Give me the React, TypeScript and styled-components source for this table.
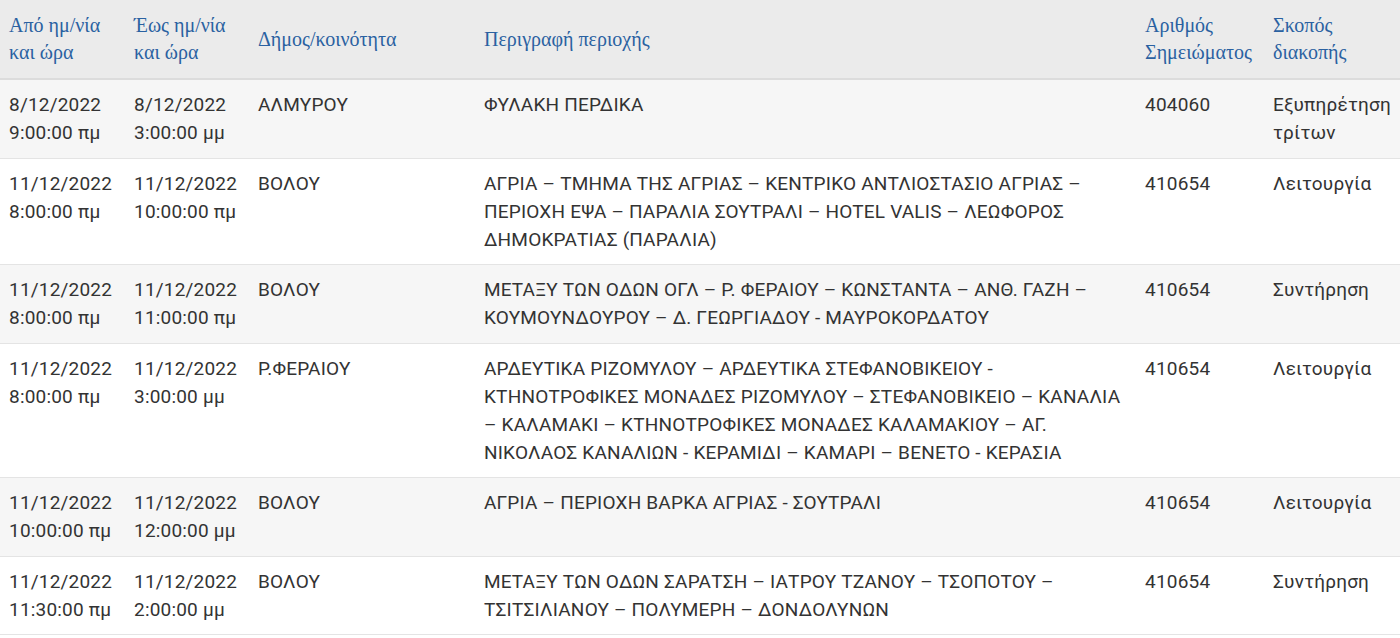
import React from "react";
import styled, { createGlobalStyle } from "styled-components";

const Global = createGlobalStyle`
  html, body { margin: 0; padding: 0; background: #ffffff; }
  body { font-family: Roboto, "Noto Sans", sans-serif; }
`;

const Table = styled.table`
  width: 1400px;
  border-collapse: collapse;
  table-layout: fixed;
`;

const HeadRow = styled.tr`
  background: #ebebeb;
  border-bottom: 2px solid #dcdcdc;
`;

const Th = styled.th`
  font-family: "Liberation Serif", "DejaVu Serif", serif;
  font-weight: normal;
  font-size: 20px;
  line-height: 27px;
  color: #2a61a1;
  text-align: left;
  vertical-align: middle;
  padding: 11px 6px 11px 9px;
  height: 56px;
`;

const Row = styled.tr<{ $striped: boolean }>`
  background: ${(p) => (p.$striped ? "#f6f6f6" : "#ffffff")};
  border-bottom: 1px solid #e4e4e4;
`;

const Td = styled.td`
  font-family: Roboto, "Noto Sans", sans-serif;
  font-size: 19px;
  letter-spacing: 0.2px;
  line-height: 28px;
  color: #333333;
  vertical-align: top;
  padding: 11px 4px 10.5px 9px;
`;

type Entry = {
  from: [string, string];
  to: [string, string];
  area: string;
  desc: string;
  note: string;
  reason: string;
};

const rows: Entry[] = [
  {
    from: ["8/12/2022", "9:00:00 πμ"],
    to: ["8/12/2022", "3:00:00 μμ"],
    area: "ΑΛΜΥΡΟΥ",
    desc: "ΦΥΛΑΚΗ ΠΕΡΔΙΚΑ",
    note: "404060",
    reason: "Εξυπηρέτηση τρίτων",
  },
  {
    from: ["11/12/2022", "8:00:00 πμ"],
    to: ["11/12/2022", "10:00:00 πμ"],
    area: "ΒΟΛΟΥ",
    desc: "ΑΓΡΙΑ – ΤΜΗΜΑ ΤΗΣ ΑΓΡΙΑΣ – ΚΕΝΤΡΙΚΟ ΑΝΤΛΙΟΣΤΑΣΙΟ ΑΓΡΙΑΣ – ΠΕΡΙΟΧΗ ΕΨΑ – ΠΑΡΑΛΙΑ ΣΟΥΤΡΑΛΙ – HOTEL VALIS – ΛΕΩΦΟΡΟΣ ΔΗΜΟΚΡΑΤΙΑΣ (ΠΑΡΑΛΙΑ)",
    note: "410654",
    reason: "Λειτουργία",
  },
  {
    from: ["11/12/2022", "8:00:00 πμ"],
    to: ["11/12/2022", "11:00:00 πμ"],
    area: "ΒΟΛΟΥ",
    desc: "ΜΕΤΑΞΥ ΤΩΝ ΟΔΩΝ ΟΓΛ – Ρ. ΦΕΡΑΙΟΥ – ΚΩΝΣΤΑΝΤΑ – ΑΝΘ. ΓΑΖΗ – ΚΟΥΜΟΥΝΔΟΥΡΟΥ – Δ. ΓΕΩΡΓΙΑΔΟΥ - ΜΑΥΡΟΚΟΡΔΑΤΟΥ",
    note: "410654",
    reason: "Συντήρηση",
  },
  {
    from: ["11/12/2022", "8:00:00 πμ"],
    to: ["11/12/2022", "3:00:00 μμ"],
    area: "Ρ.ΦΕΡΑΙΟΥ",
    desc: "ΑΡΔΕΥΤΙΚΑ ΡΙΖΟΜΥΛΟΥ – ΑΡΔΕΥΤΙΚΑ ΣΤΕΦΑΝΟΒΙΚΕΙΟΥ - ΚΤΗΝΟΤΡΟΦΙΚΕΣ ΜΟΝΑΔΕΣ ΡΙΖΟΜΥΛΟΥ – ΣΤΕΦΑΝΟΒΙΚΕΙΟ – ΚΑΝΑΛΙΑ – ΚΑΛΑΜΑΚΙ – ΚΤΗΝΟΤΡΟΦΙΚΕΣ ΜΟΝΑΔΕΣ ΚΑΛΑΜΑΚΙΟΥ – ΑΓ. ΝΙΚΟΛΑΟΣ ΚΑΝΑΛΙΩΝ - ΚΕΡΑΜΙΔΙ – ΚΑΜΑΡΙ – ΒΕΝΕΤΟ - ΚΕΡΑΣΙΑ",
    note: "410654",
    reason: "Λειτουργία",
  },
  {
    from: ["11/12/2022", "10:00:00 πμ"],
    to: ["11/12/2022", "12:00:00 μμ"],
    area: "ΒΟΛΟΥ",
    desc: "ΑΓΡΙΑ – ΠΕΡΙΟΧΗ ΒΑΡΚΑ ΑΓΡΙΑΣ - ΣΟΥΤΡΑΛΙ",
    note: "410654",
    reason: "Λειτουργία",
  },
  {
    from: ["11/12/2022", "11:30:00 πμ"],
    to: ["11/12/2022", "2:00:00 μμ"],
    area: "ΒΟΛΟΥ",
    desc: "ΜΕΤΑΞΥ ΤΩΝ ΟΔΩΝ ΣΑΡΑΤΣΗ – ΙΑΤΡΟΥ ΤΖΑΝΟΥ – ΤΣΟΠΟΤΟΥ – ΤΣΙΤΣΙΛΙΑΝΟΥ – ΠΟΛΥΜΕΡΗ – ΔΟΝΔΟΛΥΝΩΝ",
    note: "410654",
    reason: "Συντήρηση",
  },
];

const widths = [125, 124, 226, 661, 128, 136];

export default function App() {
  return (
    <>
      <Global />
      <Table>
        <colgroup>
          {widths.map((w, i) => (
            <col key={i} style={{ width: w }} />
          ))}
        </colgroup>
        <thead>
          <HeadRow>
            <Th>Από ημ/νία και ώρα</Th>
            <Th>Έως ημ/νία και ώρα</Th>
            <Th>Δήμος/κοινότητα</Th>
            <Th>Περιγραφή περιοχής</Th>
            <Th>Αριθμός Σημειώματος</Th>
            <Th>Σκοπός διακοπής</Th>
          </HeadRow>
        </thead>
        <tbody>
          {rows.map((r, i) => (
            <Row key={i} $striped={i % 2 === 0}>
              <Td>
                {r.from[0]}
                <br />
                {r.from[1]}
              </Td>
              <Td>
                {r.to[0]}
                <br />
                {r.to[1]}
              </Td>
              <Td>{r.area}</Td>
              <Td>{r.desc}</Td>
              <Td>{r.note}</Td>
              <Td>{r.reason}</Td>
            </Row>
          ))}
        </tbody>
      </Table>
    </>
  );
}
